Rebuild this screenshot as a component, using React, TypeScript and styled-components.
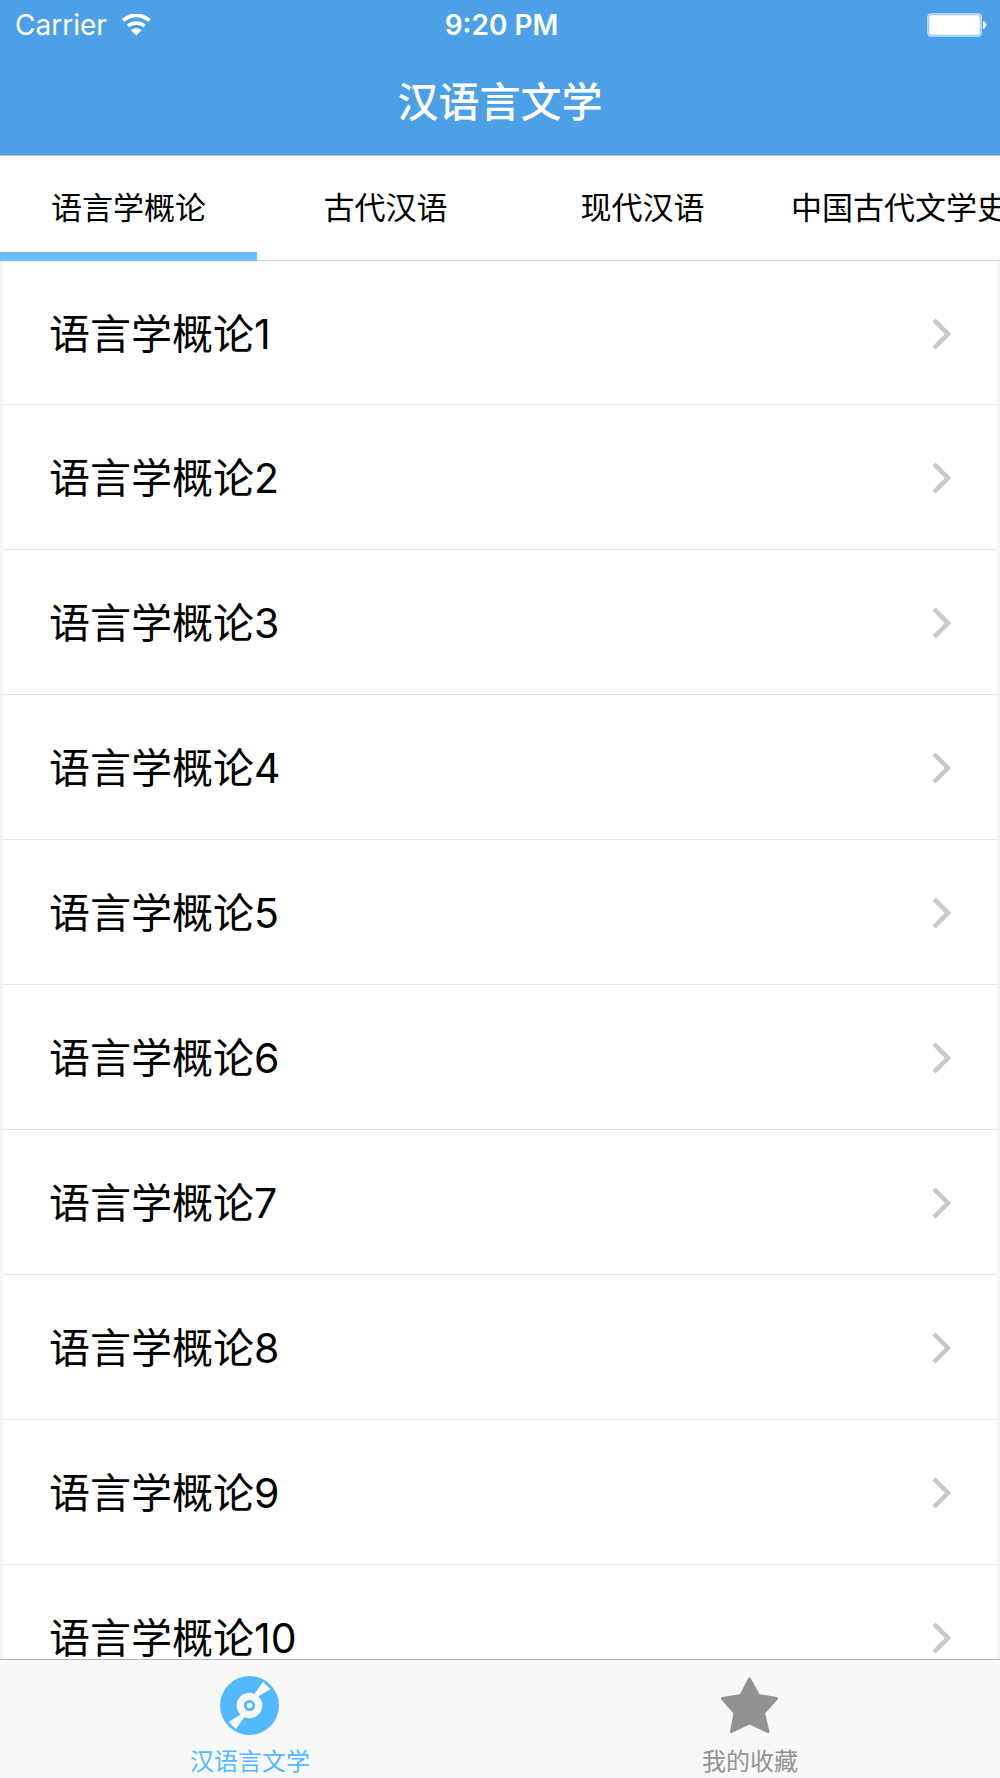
import React, { useState } from "react";
import styled, { createGlobalStyle } from "styled-components";

const GlobalStyle = createGlobalStyle`
  *, *::before, *::after { box-sizing: border-box; }
  body {
    margin: 0;
    background: #fff;
    font-family: Inter, "Noto Sans CJK SC", sans-serif;
    color: #000;
  }
  button { font: inherit; color: inherit; border: 0; background: none; padding: 0; cursor: pointer; }
  a { color: inherit; text-decoration: none; }
`;

const Screen = styled.div`
  display: flex;
  flex-direction: column;
  height: 100vh;
  overflow: hidden;
`;

const Header = styled.header`
  flex: none;
  background: #4da0e5;
  color: #fff;
  border-bottom: 1px solid #b9c0c6;
`;

const StatusBar = styled.div`
  display: grid;
  grid-template-columns: 1fr auto 1fr;
  align-items: center;
  height: 51px;
  padding: 0 12px 0 15px;
  font-size: 28px;
  line-height: 51px;
`;

const Carrier = styled.span`
  display: flex;
  align-items: center;
  gap: 14px;
  font-weight: 400;
`;

const Clock = styled.time`
  font-weight: 600;
`;

const Battery = styled.svg`
  display: block;
  justify-self: end;
`;

const Title = styled.h1`
  margin: 0;
  height: 104px;
  font-size: 41px;
  line-height: 102px;
  font-weight: 500;
  text-align: center;
`;

const Categories = styled.nav`
  flex: none;
  display: flex;
  height: 105px;
  overflow-x: auto;
  scrollbar-width: none;
  box-shadow: inset 0 -1px 0 #d4d4d6;
`;

const Category = styled.button<{ $active: boolean }>`
  flex: 0 0 257px;
  padding-top: 8px;
  font-size: 31px;
  line-height: 88px;
  white-space: nowrap;
  border-bottom: 9px solid ${(p) => (p.$active ? "#6cbcff" : "transparent")};
`;

const List = styled.ul`
  flex: 1;
  min-height: 0;
  margin: 0;
  padding: 0;
  list-style: none;
  overflow-y: auto;
  scrollbar-width: none;
  border: solid #f3f3f4;
  border-width: 0 3px;
`;

const Row = styled.a`
  display: flex;
  align-items: center;
  justify-content: space-between;
  height: 145px;
  padding: 2px 45px 0 46px;
  font-size: 41px;
  line-height: 60px;
  border-bottom: 1px solid #e4e4e6;

  li:first-child > & { height: 144px; }
`;

const TabBar = styled.nav`
  flex: none;
  display: flex;
  height: 119px;
  background: #f8f8f8;
  border-top: 1px solid #b4b4b6;
`;

const Tab = styled.button<{ $active: boolean }>`
  flex: 1;
  display: flex;
  flex-direction: column;
  align-items: center;
  gap: 11px;
  padding-top: 16px;
  font-size: 24px;
  line-height: 30px;
  color: ${(p) => (p.$active ? "#53b8ff" : "#929292")};

  svg { flex: none; }
`;

const WifiIcon = () => (
  <svg width="32" height="24" viewBox="0 0 32 24" fill="none" stroke="#fff" aria-hidden="true">
    <path d="M2 6.500C10 -.5 20.500 -.5 28.500 6.500" strokeWidth="3.800" />
    <path d="M7 12C11.500 8 19 8 23.500 12" strokeWidth="3.600" />
    <path d="M10 16.200C13 13.600 17.500 13.600 20.500 16.200L15.250 21.500Z" fill="#fff" stroke="none" />
  </svg>
);

const BatteryIcon = () => (
  <Battery width="61" height="26" viewBox="0 0 61 26" role="img" aria-label="Battery full">
    <rect x=".8" y=".8" width="53.400" height="22.400" rx="3.500" fill="#fff" fillOpacity=".25" stroke="#fff" strokeOpacity=".7" strokeWidth="1.300" />
    <rect x="2.200" y="2.300" width="50.600" height="19.400" rx="2" fill="#fff" />
    <path d="M56 8C60.200 8.500 60.200 15.500 56 16Z" fill="#fff" />
  </Battery>
);

const Chevron = () => (
  <svg width="20" height="32" viewBox="0 0 20 32" fill="none" stroke="#c7c7cc" strokeWidth="4.500" aria-hidden="true">
    <path d="M2 2L16 16L2 30" />
  </svg>
);

const DiscIcon = () => (
  <svg width="60" height="60" viewBox="0 0 60 60" aria-hidden="true">
    <circle cx="29.500" cy="29.500" r="29.500" fill="currentColor" />
    <path d="M43 6L50.500 13L37.500 21L34.500 18Z M16 53L8.500 46L21.500 38L24.500 41Z" fill="#f8f8f8" />
    <circle cx="29.500" cy="29.500" r="12.800" fill="#f8f8f8" />
    <circle cx="29.500" cy="29.500" r="4.200" fill="none" stroke="currentColor" strokeWidth="2.800" />
  </svg>
);

const StarIcon = () => (
  <svg width="60" height="60" viewBox="0 0 60 60" fill="currentColor" stroke="currentColor" strokeWidth="3" strokeLinejoin="round" aria-hidden="true">
    <path d="M29.500 3L38.500 19.500L56.500 22.500L43.500 37L48 55.500L29.500 47L11.500 55.500L15 37L2.500 22.500L21 19.500Z" />
  </svg>
);

const categories = ["语言学概论", "古代汉语", "现代汉语", "中国古代文学史"];
const tabs = [
  { label: "汉语言文学", Icon: DiscIcon },
  { label: "我的收藏", Icon: StarIcon },
];

export default function App() {
  const [category, setCategory] = useState(0);
  const [tab, setTab] = useState(0);

  return (
    <Screen>
      <GlobalStyle />
      <Header>
        <StatusBar>
          <Carrier>
            Carrier
            <WifiIcon />
          </Carrier>
          <Clock>9:20 PM</Clock>
          <BatteryIcon />
        </StatusBar>
        <Title>汉语言文学</Title>
      </Header>
      <Categories>
        {categories.map((name, i) => (
          <Category key={name} $active={i === category} onClick={() => setCategory(i)}>
            {name}
          </Category>
        ))}
      </Categories>
      <List>
        {Array.from({ length: 10 }, (_, i) => (
          <li key={i}>
            <Row href={`#chapter-${i + 1}`}>
              {categories[category]}
              {i + 1}
              <Chevron />
            </Row>
          </li>
        ))}
      </List>
      <TabBar>
        {tabs.map(({ label, Icon }, i) => (
          <Tab key={label} $active={i === tab} onClick={() => setTab(i)}>
            <Icon />
            {label}
          </Tab>
        ))}
      </TabBar>
    </Screen>
  );
}
